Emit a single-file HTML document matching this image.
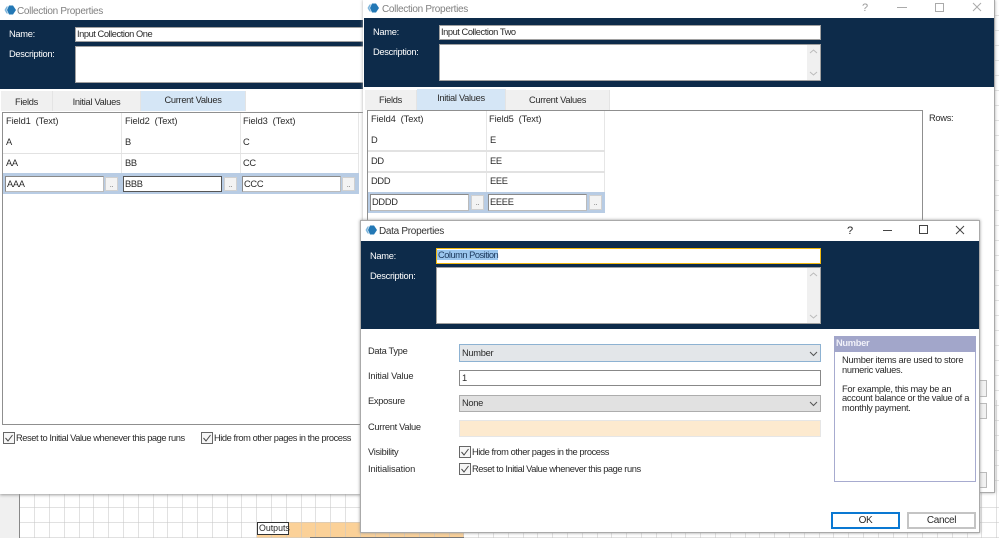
<!DOCTYPE html>
<html><head><meta charset="utf-8"><style>
html,body{margin:0;padding:0;background:#fff}
#r{position:relative;width:999px;height:538px;overflow:hidden;background:#fff;font-family:"Liberation Sans",sans-serif;font-size:9.3px;letter-spacing:-.3px;color:#2a2a2a;filter:blur(.3px)}
#r div{position:absolute;box-sizing:border-box;white-space:nowrap}
.t{line-height:12px;height:12px}
.f{letter-spacing:-.1px}
.l{letter-spacing:-.43px}
.w{color:#fff}
.g{color:#808080;font-size:10px}
.in{background:#fff;border:1px solid #8a8a8a;border-right-color:#bbb;border-bottom-color:#bbb;padding-left:1px;line-height:14px}
.navin{background:#fff;border:1px solid #a0a0a0;padding-left:1px;line-height:12px;letter-spacing:-.45px}
.tab{text-align:center;line-height:22px;background:#f0f0f0;border-right:1px solid #e4e4e4}
.on{background:#d5e6f6}
.h{background:#e2e2e2}
.v{background:#e6e6e6}
.b{background:#f3f3f3;border:1px solid #d0d0d0;color:#777;text-align:center;line-height:14px;font-size:8px}
.cb{width:12px;height:12px;border:1px solid #666;background:#f6f6f6}
svg{position:absolute}
</style></head><body><div id="r">
<div style="left:0;top:493px;width:999px;height:45px;background:#fff"></div>
<div style="left:0;top:493px;width:19px;height:45px;background:#f0f0f0"></div>
<div style="left:19px;top:493px;width:1px;height:45px;background:#888"></div>
<div style="left:257px;top:522px;width:207px;height:16px;background:#fbd198"></div>
<svg width="999" height="538" style="left:0;top:0">
<g stroke="#c8c8c8" stroke-opacity=".55" stroke-width="1">
<path d="M34.500 493V538M49.500 493V538M64.500 493V538M79.500 493V538M93.500 493V538M108.500 493V538M123.500 493V538M138.500 493V538M153.500 493V538M167.500 493V538M182.500 493V538M197.500 493V538M212.500 493V538M227.500 493V538M241.500 493V538M256.500 493V538M271.500 493V538M286.500 493V538M301.500 493V538M315.500 493V538M330.500 493V538M345.500 493V538M360.500 493V538M375.500 493V538M389.500 493V538M404.500 493V538M419.500 493V538M434.500 493V538M449.500 493V538M463.500 493V538M478.500 493V538M493.500 493V538M508.500 493V538M523.500 493V538M537.500 493V538M552.500 493V538M567.500 493V538M582.500 493V538M597.500 493V538M611.500 493V538M626.500 493V538M641.500 493V538M656.500 493V538M671.500 493V538M685.500 493V538M700.500 493V538M715.500 493V538M730.500 493V538M745.500 493V538M759.500 493V538M774.500 493V538M789.500 493V538M804.500 493V538M819.500 493V538M833.500 493V538M848.500 493V538M863.500 493V538M878.500 493V538M893.500 493V538M907.500 493V538M922.500 493V538M937.500 493V538M952.500 493V538M967.500 493V538M981.500 493V538M996.500 400V538"/>
<path d="M20 507.500H999M20 522.500H999M20 537.500H999M995 15.500H999M995 30.500H999M995 45.500H999M995 60.500H999M995 75.500H999M995 90.500H999M995 105.500H999M995 120.500H999M995 135.500H999M995 150.500H999M995 165.500H999M995 180.500H999M995 195.500H999M995 210.500H999M995 225.500H999M995 240.500H999M995 255.500H999M995 270.500H999M995 285.500H999M995 300.500H999M995 315.500H999M995 330.500H999M995 345.500H999M995 360.500H999M995 375.500H999M995 390.500H999M995 405.500H999M995 420.500H999M995 435.500H999M995 450.500H999M995 465.500H999M995 480.500H999"/>
</g></svg>
<div style="left:310px;top:537px;width:154px;height:1px;background:#777"></div>
<div class="t" style="left:257px;top:522px;width:32px;height:13px;background:#fff;border:1px solid #333;line-height:11px;padding-left:1px;font-size:8.8px;letter-spacing:0">Outputs</div>

<!-- Window 1 -->
<div style="left:0;top:0;width:364px;height:494px;background:#fff;box-shadow:0 1px 3px #999"></div>
<svg width="14" height="12" style="left:3px;top:4px"><path d="M6 1.500 10 1.500 13 6 10 10.500 6 10.500 4 6Z" fill="#2378b5"/><path d="M1.500 6 3.500 2.500 5 2.500 3.500 6 5 9.500 3.500 9.500Z" fill="#7fb6dc"/></svg>
<div class="t g" style="left:17px;top:4px;top:6px">Collection Properties</div>
<div style="left:0;top:20px;width:364px;height:69px;background:#0d2b4a"></div>
<div class="t w" style="left:9px;top:28px">Name:</div>
<div class="t w" style="left:9px;top:48px">Description:</div>
<div class="navin" style="left:75px;top:27px;width:289px;height:15px">Input Collection One</div>
<div class="navin" style="left:75px;top:46px;width:289px;height:37px"></div>
<div class="tab" style="left:1px;top:91px;width:52px;height:20px">Fields</div>
<div class="tab" style="left:53px;top:91px;width:88px;height:20px">Initial Values</div>
<div class="tab on" style="left:141px;top:91px;width:105px;height:20px;line-height:18px">Current Values</div>
<div style="left:2px;top:112px;width:362px;height:313px;border:1px solid #8f8f8f;border-right:0;background:#fff"></div>
<div class="v" style="left:121px;top:113px;width:1px;height:81px"></div>
<div class="v" style="left:240px;top:113px;width:1px;height:81px"></div>
<div class="v" style="left:358px;top:113px;width:1px;height:81px"></div>
<div class="h" style="left:3px;top:153px;width:356px;height:1px"></div>
<div class="t f" style="left:6px;top:115px">Field1&nbsp; (Text)</div>
<div class="t f" style="left:125px;top:115px">Field2&nbsp; (Text)</div>
<div class="t f" style="left:243px;top:115px">Field3&nbsp; (Text)</div>
<div class="t" style="left:6px;top:136px">A</div>
<div class="t" style="left:125px;top:136px">B</div>
<div class="t" style="left:243px;top:136px">C</div>
<div class="t" style="left:6px;top:157px">AA</div>
<div class="t" style="left:125px;top:157px">BB</div>
<div class="t" style="left:243px;top:157px">CC</div>
<div style="left:3px;top:173px;width:356px;height:21px;background:#b8cce4"></div>
<div class="in" style="left:5px;top:176px;width:99px;height:16px">AAA</div>
<div class="b" style="left:105px;top:177px;width:13px;height:14px">..</div>
<div class="in" style="left:123px;top:176px;width:99px;height:16px;border:1px solid #555">BBB</div>
<div class="b" style="left:224px;top:177px;width:13px;height:14px">..</div>
<div class="in" style="left:242px;top:176px;width:99px;height:16px">CCC</div>
<div class="b" style="left:342px;top:177px;width:13px;height:14px">..</div>
<div class="cb" style="left:3px;top:432px"></div>
<svg width="12" height="12" style="left:3px;top:432px"><path d="M2.500 6 5 9 9.500 3" fill="none" stroke="#444" stroke-width="1"/></svg>
<div class="t l" style="left:16px;top:432px">Reset to Initial Value whenever this page runs</div>
<div class="cb" style="left:201px;top:432px"></div>
<svg width="12" height="12" style="left:201px;top:432px"><path d="M2.500 6 5 9 9.500 3" fill="none" stroke="#444" stroke-width="1"/></svg>
<div class="t l" style="left:214px;top:432px">Hide from other pages in the process</div>

<!-- Window 2 -->
<div style="left:363px;top:0;width:632px;height:493px;background:#fff;border-right:1px solid #aaa;border-bottom:1px solid #aaa;box-shadow:0 0 3px #aaa"></div>
<svg width="14" height="12" style="left:366px;top:2px"><path d="M6 1.500 10 1.500 13 6 10 10.500 6 10.500 4 6Z" fill="#2378b5"/><path d="M1.500 6 3.500 2.500 5 2.500 3.500 6 5 9.500 3.500 9.500Z" fill="#7fb6dc"/></svg>
<div class="t g" style="left:382px;top:4px">Collection Properties</div>
<div class="t" style="left:862px;top:2px;color:#999;font-size:11px">?</div>
<svg width="100" height="16" style="left:895px;top:0"><path d="M2 7.500H12" stroke="#aaa"/><rect x="40.500" y="3.500" width="8" height="8" fill="none" stroke="#aaa"/><path d="M78 3 86 11M86 3 78 11" stroke="#aaa"/></svg>
<div style="left:364px;top:18px;width:630px;height:69px;background:#0d2b4a"></div>
<div class="t w" style="left:373px;top:26px">Name:</div>
<div class="t w" style="left:373px;top:46px">Description:</div>
<div class="navin" style="left:439px;top:25px;width:382px;height:15px">Input Collection Two</div>
<div class="navin" style="left:439px;top:44px;width:382px;height:37px"></div>
<div style="left:807px;top:45px;width:13px;height:35px;background:#f0f0f0"></div>
<svg width="13" height="35" style="left:807px;top:45px"><path d="M3 8 6.500 5 10 8M3 27 6.500 30 10 27" fill="none" stroke="#bbb"/></svg>
<div class="tab" style="left:365px;top:90px;width:52px;height:20px;line-height:21px">Fields</div>
<div class="tab on" style="left:417px;top:89px;width:89px;height:21px;line-height:19px">Initial Values</div>
<div class="tab" style="left:506px;top:90px;width:104px;height:20px;line-height:21px">Current Values</div>
<div style="left:367px;top:110px;width:556px;height:115px;border:1px solid #8f8f8f;border-bottom:0;background:#fff"></div>
<div class="v" style="left:486px;top:111px;width:1px;height:101px"></div>
<div class="v" style="left:604px;top:111px;width:1px;height:101px"></div>
<div class="h" style="left:368px;top:150px;width:237px;height:2px"></div>
<div class="h" style="left:368px;top:171px;width:237px;height:2px"></div>
<div class="t f" style="left:371px;top:113px">Field4&nbsp; (Text)</div>
<div class="t f" style="left:489px;top:113px">Field5&nbsp; (Text)</div>
<div class="t" style="left:371px;top:134px">D</div>
<div class="t" style="left:490px;top:134px">E</div>
<div class="t" style="left:371px;top:155px">DD</div>
<div class="t" style="left:490px;top:155px">EE</div>
<div class="t" style="left:371px;top:175px">DDD</div>
<div class="t" style="left:490px;top:175px">EEE</div>
<div style="left:368px;top:192px;width:237px;height:21px;background:#b8cce4"></div>
<div class="in" style="left:370px;top:194px;width:99px;height:17px">DDDD</div>
<div class="b" style="left:471px;top:195px;width:13px;height:15px">..</div>
<div class="in" style="left:488px;top:194px;width:99px;height:17px">EEEE</div>
<div class="b" style="left:589px;top:195px;width:13px;height:15px">..</div>
<div class="t" style="left:929px;top:112px">Rows:</div>
<div style="left:975px;top:380px;width:12px;height:17px;border:1px solid #bbb;background:#f2f2f2"></div>
<div style="left:975px;top:403px;width:12px;height:16px;border:1px solid #bbb;background:#f2f2f2"></div>
<div style="left:970px;top:472px;width:17px;height:16px;border:1px solid #bbb;background:#f2f2f2"></div>

<!-- Window 3 -->
<div style="left:360px;top:220px;width:620px;height:313px;background:#fff;border:1px solid #aaa;box-shadow:0 0 3px #999"></div>
<svg width="14" height="12" style="left:364px;top:224px"><path d="M6 1.500 10 1.500 13 6 10 10.500 6 10.500 4 6Z" fill="#2378b5"/><path d="M1.500 6 3.500 2.500 5 2.500 3.500 6 5 9.500 3.500 9.500Z" fill="#7fb6dc"/></svg>
<div class="t" style="left:379px;top:226px;font-size:10px;color:#333">Data Properties</div>
<div class="t" style="left:847px;top:225px;font-size:11px;color:#222">?</div>
<svg width="100" height="16" style="left:880px;top:222px"><path d="M3 8.500H12" stroke="#444"/><rect x="39.500" y="3.500" width="8" height="8" fill="none" stroke="#444"/><path d="M76 4 84 12M84 4 76 12" stroke="#444"/></svg>
<div style="left:361px;top:241px;width:618px;height:88px;background:#0d2b4a"></div>
<div class="t w" style="left:370px;top:250px">Name:</div>
<div class="t w" style="left:370px;top:270px">Description:</div>
<div class="navin" style="left:436px;top:248px;width:385px;height:16px;border:1px solid #f2b90f;line-height:13px;padding-left:0"><span style="background:#9cc7ee;color:#1c3a5e;letter-spacing:-.5px;padding-left:1px">Column Position</span></div>
<div class="navin" style="left:436px;top:267px;width:385px;height:57px"></div>
<div style="left:807px;top:268px;width:13px;height:55px;background:#f0f0f0"></div>
<svg width="13" height="55" style="left:807px;top:268px"><path d="M3 8 6.500 5 10 8M3 47 6.500 50 10 47" fill="none" stroke="#bbb"/></svg>
<div class="t" style="left:368px;top:345px">Data Type</div>
<div class="t" style="left:368px;top:370px;letter-spacing:-.15px">Initial Value</div>
<div class="t" style="left:368px;top:395px">Exposure</div>
<div class="t" style="left:368px;top:421px">Current Value</div>
<div class="t" style="left:368px;top:446px">Visibility</div>
<div class="t" style="left:368px;top:463px;letter-spacing:-.1px">Initialisation</div>
<div style="left:459px;top:344px;width:362px;height:18px;background:#e3e6e9;border:1px solid #8db2d2;padding-left:2px;line-height:16px">Number</div>
<svg width="10" height="6" style="left:809px;top:351px"><path d="M1 1 4.500 4.500 8 1" fill="none" stroke="#555"/></svg>
<div class="in" style="left:459px;top:370px;width:362px;height:16px;border:1px solid #888;padding-left:2px">1</div>
<div style="left:459px;top:395px;width:362px;height:17px;background:#e1e1e1;border:1px solid #adadad;padding-left:2px;line-height:15px">None</div>
<svg width="10" height="6" style="left:809px;top:401px"><path d="M1 1 4.500 4.500 8 1" fill="none" stroke="#555"/></svg>
<div style="left:459px;top:420px;width:362px;height:17px;background:#fdeacf;border:1px solid #e6e6e6"></div>
<div class="cb" style="left:459px;top:446px"></div>
<svg width="12" height="12" style="left:459px;top:446px"><path d="M2.500 6 5 9 9.500 3" fill="none" stroke="#444" stroke-width="1"/></svg>
<div class="t l" style="left:472px;top:446px">Hide from other pages in the process</div>
<div class="cb" style="left:459px;top:463px"></div>
<svg width="12" height="12" style="left:459px;top:463px"><path d="M2.500 6 5 9 9.500 3" fill="none" stroke="#444" stroke-width="1"/></svg>
<div class="t l" style="left:472px;top:463px">Reset to Initial Value whenever this page runs</div>
<div style="left:834px;top:336px;width:142px;height:146px;background:#fff;border:1px solid #a7abcf"></div>
<div class="t" style="left:834px;top:336px;width:142px;height:16px;background:#a2a6ca;color:#f0f0f8;font-weight:bold;line-height:15px;padding-left:2px">Number</div>
<div class="t" style="left:842px;top:356px;line-height:9.500px;height:auto">Number items are used to store<br>numeric values.<br><br>For example, this may be an<br>account balance or the value of a<br>monthly payment.</div>
<div style="left:831px;top:512px;width:69px;height:17px;background:#fff;border:2px solid #0a78d2;text-align:center;line-height:13px;font-size:10px">OK</div>
<div style="left:907px;top:512px;width:69px;height:17px;background:#fff;border:2px solid #c4c4c4;text-align:center;line-height:13px;font-size:10px">Cancel</div>
</div></body></html>
